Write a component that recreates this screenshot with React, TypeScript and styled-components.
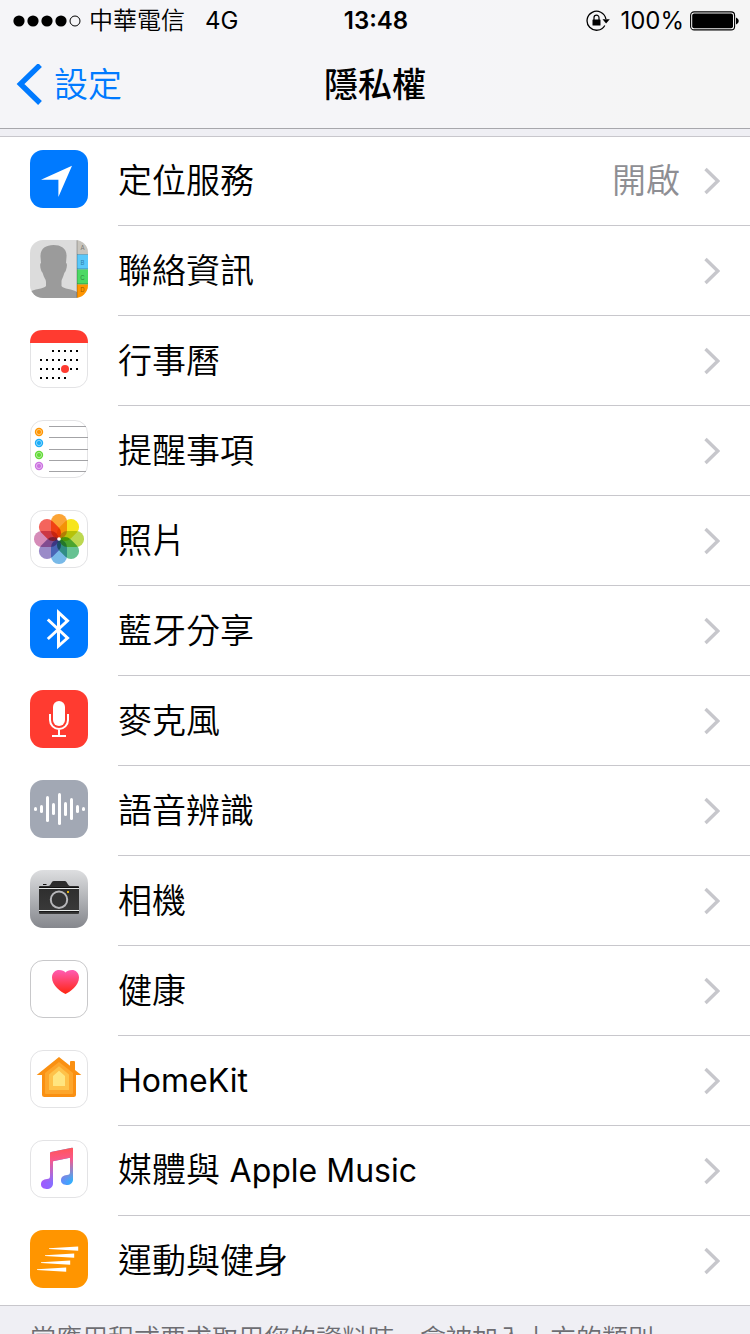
import React from 'react';
import styled, { createGlobalStyle } from 'styled-components';

const GlobalStyle = createGlobalStyle`
  * { box-sizing: border-box; }
  body {
    margin: 0;
    background: #efeff4;
    color: #000;
    font-family: Inter, 'Noto Sans CJK TC', sans-serif;
    font-weight: 400;
  }
`;

const Screen = styled.div`
  display: flex;
  flex-direction: column;
  height: 100vh;
  overflow: hidden;
`;

const TopBar = styled.header`
  flex: none;
  background: linear-gradient(to right, #f5f5f8 60%, #f5f5f5 90%);
  border-bottom: 1px solid #a7a7ac;
`;

const StatusBar = styled.div`
  display: grid;
  grid-template-columns: 1fr auto 1fr;
  align-items: center;
  height: 42px;
  padding: 0 11px 0 13px;
  font-size: 24px;
  line-height: 42px;
`;

const StatusGroup = styled.div<{ $end?: boolean }>`
  display: flex;
  align-items: center;
  justify-content: ${(p) => (p.$end ? 'flex-end' : 'flex-start')};
  gap: ${(p) => (p.$end ? 6 : 8)}px;
  white-space: nowrap;
`;

const Carrier = styled.span`
  font-weight: 350;
  margin-right: 12px;
`;

const LockGlyph = styled.svg`
  margin-right: 4px;
`;

const Clock = styled.time`
  font-weight: 600;
`;

const NavBar = styled.nav`
  display: grid;
  grid-template-columns: 1fr auto 1fr;
  align-items: center;
  height: 86px;
  padding: 0 16px;
`;

const BackButton = styled.button`
  display: flex;
  align-items: center;
  justify-self: start;
  gap: 10px;
  padding: 0;
  border: 0;
  background: none;
  color: #007aff;
  font: inherit;
  font-weight: 350;
  font-size: 34px;
  line-height: 48px;
`;

const Title = styled.h1`
  margin: 0;
  font-size: 34px;
  line-height: 48px;
  font-weight: 500;
`;

const Content = styled.main`
  flex: 1;
  min-height: 0;
  padding-top: 7px;
  overflow-y: auto;
  scrollbar-width: none;
`;

const List = styled.ul`
  margin: 0;
  padding: 0;
  list-style: none;
  background: #fff;
  box-shadow: inset 0 1px #c8c7cc, inset 0 -1px #c8c7cc;
`;

const RowBody = styled.span`
  display: flex;
  align-items: center;
  flex: 1;
  min-height: 90px;
  padding-right: 30px;
  border-bottom: 1px solid #c8c7cc;
`;

const Row = styled.a`
  display: flex;
  align-items: flex-start;
  color: inherit;
  text-decoration: none;

  li:last-child & ${RowBody} {
    border-bottom-color: transparent;
  }
`;

const AppIcon = styled.svg`
  flex: none;
  margin: 14px 30px 0;
`;

const Label = styled.span`
  flex: 1;
  font-size: 34px;
  line-height: 48px;
  font-weight: 350;
`;

const Latin = styled.span`
  font-size: 32px;
  font-weight: 400;
`;

const Value = styled.span`
  margin-right: 24px;
  color: #8e8e93;
  font-size: 34px;
  line-height: 48px;
  font-weight: 350;
`;

const Footnote = styled.p`
  margin: 0;
  padding: 15px 30px;
  color: #6d6d72;
  font-size: 26px;
  line-height: 36px;
  font-weight: 350;
`;

const Outline = ({ color = '#e3e3e5' }: { color?: string }) => (
  <rect x=".5" y=".5" width="57" height="57" rx="12.5" fill="none" stroke={color} />
);
const Tile = ({ fill }: { fill: string }) => <rect width="58" height="58" rx="13" fill={fill} />;

const LocationArt = () => (
  <>
    <Tile fill="#007aff" />
    <path d="M11 29.8 42 15.8 28.4 47V29.8Z" fill="#fff" />
  </>
);

const tabs = [
  ['A', '#c8c5be', 0, '#77756f'],
  ['B', '#5ac8fa', 14.5, '#2f7fa6'],
  ['C', '#4cd964', 29.5, '#2a8b3a'],
  ['D', '#ff9500', 44.5, '#9c5a00'],
] as const;

const ContactsArt = () => (
  <>
    <clipPath id="contacts-tile"><rect width="58" height="58" rx="13" /></clipPath>
    <g clipPath="url(#contacts-tile)">
      <rect width="58" height="58" fill="#dcdcdc" />
      <path
        d="M23.500 5C31 5 37.300 8.500 36.500 17L36 23C37.500 23.500 37 27 36 30C35.500 32 34.500 32 34 34C33 38 31.500 39 31.500 42V46C33 49 43 49 47 52V58H0V52C3 49 14 49 16 46V42C16 39 14 38 13 34C12.500 32 11.500 32 11 30C10 27 9.800 23.500 11 23L10.500 17C10 8.500 16 5 23.500 5Z"
        fill="#9b9b9b"
      />
      {tabs.map(([letter, color, y, ink]) => (
        <g key={letter}>
          <rect x="47" y={y} width="11" height="15" fill={color} />
          <rect x="47" y={y + 14} width="11" height="1" fill="#000" opacity=".3" />
          <text x="52.500" y={letter === 'D' ? y + 7 : y + 10} fontSize="6" textAnchor="middle" fill={ink}>{letter}</text>
        </g>
      ))}
      <rect x="46.500" width="1" height="58" fill="#000" opacity=".25" />
    </g>
  </>
);

const CalendarArt = () => (
  <>
    <Outline />
    <path d="M0 13C0 4 5 0 13 0H45C53 0 58 4 58 13Z" fill="#ff3b30" />
    {[[21, 2, 6], [30, 0, 6], [39, 0, 6], [48, 0, 4]].map(([y, from, to]) =>
      Array.from({ length: to - from + 1 }, (_, i) => (
        <rect key={`${y}-${i}`} x={10 + (from + i) * 6} y={y - 1} width="2" height="2" fill="#000" />
      )),
    )}
    <circle cx="35" cy="39" r="4" fill="#ff3b30" />
  </>
);

const RemindersArt = () => (
  <>
    <Outline />
    <path d="M19 6.500H56M19 17.500H58M19 29.500H58M19 40.500H58M19 51.500H56" stroke="#a3a3a6" />
    {[['#ff9500', 12], ['#1badf8', 23], ['#63da38', 35], ['#cc73e1', 46]].map(([color, y]) => (
      <g key={color}>
        <circle cx="9" cy={y} r="4.200" fill={color as string} />
        <circle cx="9" cy={y} r="2.600" fill={color as string} stroke="#fff" strokeWidth=".8" strokeOpacity=".6" />
      </g>
    ))}
  </>
);

const petals = ['#fba436', '#f7e51e', '#bcd850', '#66c292', '#78b9e8', '#9a8bc8', '#d58bb8', '#f4645c'];

const PhotosArt = () => (
  <g style={{ isolation: 'isolate' }}>
    <rect width="58" height="58" rx="13" fill="#fff" />
    <Outline />
    {petals.map((color, i) => (
      <rect
        key={color}
        x="21"
        y="4"
        width="16"
        height="24.500"
        rx="7.800"
        fill={color}
        transform={`rotate(${i * 45} 29 29)`}
        style={{ mixBlendMode: 'multiply' }}
      />
    ))}
    <circle cx="29" cy="29" r="1.800" fill="#fff" />
  </g>
);

const BluetoothArt = () => (
  <>
    <Tile fill="#007aff" />
    <path d="M17.800 19.500 37.500 38 28.500 46V12.500L37.500 20.800 17.800 39" fill="none" stroke="#fff" strokeWidth="3" />
  </>
);

const MicrophoneArt = () => (
  <>
    <Tile fill="#ff3b30" />
    <rect x="23" y="11" width="12" height="25" rx="6" fill="#fff" />
    <path d="M20 24V30a9 9 0 0 0 18 0V24M29 39V46M22 46H36" fill="none" stroke="#fff" strokeWidth="2" />
  </>
);

const SpeechArt = () => (
  <>
    <Tile fill="#a2a8b4" />
    {[2, 4, 13, 6, 16, 7, 11, 4, 2].map((half, i) => (
      <rect key={i} x={4 + i * 6} y={29 - half} width="3" height={half * 2} rx="1.500" fill="#fff" />
    ))}
  </>
);

const CameraArt = () => (
  <>
    <linearGradient id="camera-tile" x2="0" y2="1">
      <stop stopColor="#dddee0" />
      <stop offset="1" stopColor="#85878d" />
    </linearGradient>
    <linearGradient id="camera-body" x2="0" y2="1">
      <stop stopColor="#2b2b2b" />
      <stop offset="1" stopColor="#3b3b3b" />
    </linearGradient>
    <Tile fill="url(#camera-tile)" />
    <path d="M13 14.500h3.500" stroke="#111" />
    <path d="M9 17Q9 16 10 16H18Q19.500 16 20.500 14.500L22 12Q22.500 11 24 11H34.500Q36 11 36.500 12L38 14.500Q39 16 40.500 16H48Q49 16 49 17V43Q49 44 48 44H10Q9 44 9 43Z" fill="url(#camera-body)" />
    <path d="M9 18.500H49M9 40.500H49" stroke="#e6e9e8" />
    <path d="M9 17.500H49M9 41.700H49" stroke="#111" />
    <circle cx="29" cy="29.700" r="8.200" fill="#333" stroke="#b7b7ba" strokeWidth="2" />
    <rect x="37" y="21" width="2" height="2" fill="#e0b010" />
  </>
);

const HealthArt = () => (
  <>
    <linearGradient id="heart" x2="0" y2="1">
      <stop stopColor="#ff5cb4" />
      <stop offset="1" stopColor="#ff2510" />
    </linearGradient>
    <Outline color="#c8c8ca" />
    <path d="M35.500 34C31 32 22 25.500 22 17.500C22 12.500 25.500 10 29 10C32 10 34.500 11 35.500 12.500C36.500 11 39 10 42 10C45.500 10 49 12.500 49 17.500C49 25.500 40 32 35.500 34Z" fill="url(#heart)" />
  </>
);

const HomeArt = () => (
  <>
    <Outline />
    <path d="M29 7 40 15.800V12Q40 11 41 11H44Q45 11 45 12V20L51.300 25H46V44.500Q46 47 43.500 47H14.500Q12 47 12 44.500V25H6.700Z" fill="#fa9012" />
    <path d="M29 12 43 23V43Q43 44 42 44H16Q15 44 15 43V23Z" fill="#fda62c" />
    <path d="M29 16.300 39 24.500V40H19V24.500Z" fill="#fec24a" />
    <path d="M29 20.700 35 26V36H23V26Z" fill="#ffe580" />
  </>
);

const MusicArt = () => (
  <>
    <linearGradient id="note-side" x1="11" x2="43" y1="49" y2="43" gradientUnits="userSpaceOnUse">
      <stop stopColor="#a257ff" />
      <stop offset=".35" stopColor="#8a6cff" />
      <stop offset="1" stopColor="#2fb2fb" />
    </linearGradient>
    <linearGradient id="note-top" x1="29" x2="31" y1="10" y2="42" gradientUnits="userSpaceOnUse">
      <stop stopColor="#ff5560" />
      <stop offset=".3" stopColor="#f9588a" />
      <stop offset="1" stopColor="#f958a0" stopOpacity="0" />
    </linearGradient>
    <Outline />
    {['url(#note-side)', 'url(#note-top)'].map((fill) => (
      <path
        key={fill}
        d="M21 12 42 7.800Q43 7.600 43 8.600V39.500C43 43 40.500 45 36.500 45C33 45 31 43 31 40.300C31 37 33.500 35.300 37 35C39.500 34.800 40 34 40 32V17.700L23 21.200V43.500C23 47 20.500 49 16.500 49C13 49 11 47 11 44.300C11 41 13.500 39.300 17 39C19.500 38.800 20 38 20 36V13.300Q20 12.200 21 12Z"
        fill={fill}
      />
    ))}
  </>
);

const MotionArt = () => (
  <>
    <Tile fill="#ff9500" />
    {[0, 1, 2, 3].map((i) => (
      <path key={i} d="M19 18.200 48.200 16.500V20.700L19 19Z" transform={`translate(${-4 * i} ${7 * i})`} fill="#fff" />
    ))}
  </>
);

interface Item {
  label: string;
  latin?: string;
  value?: string;
  Art: () => React.JSX.Element;
}

const items: Item[] = [
  { label: '定位服務', value: '開啟', Art: LocationArt },
  { label: '聯絡資訊', Art: ContactsArt },
  { label: '行事曆', Art: CalendarArt },
  { label: '提醒事項', Art: RemindersArt },
  { label: '照片', Art: PhotosArt },
  { label: '藍牙分享', Art: BluetoothArt },
  { label: '麥克風', Art: MicrophoneArt },
  { label: '語音辨識', Art: SpeechArt },
  { label: '相機', Art: CameraArt },
  { label: '健康', Art: HealthArt },
  { label: '', latin: 'HomeKit', Art: HomeArt },
  { label: '媒體與 ', latin: 'Apple Music', Art: MusicArt },
  { label: '運動與健身', Art: MotionArt },
];

const Disclosure = () => (
  <svg width="16" height="28" viewBox="0 0 16 28" aria-hidden="true">
    <path d="M1.500 2 13.800 14 1.500 26" fill="none" stroke="#c7c7cc" strokeWidth="3.400" />
  </svg>
);

export default function App() {
  return (
    <Screen lang="zh-Hant">
      <GlobalStyle />
      <TopBar>
        <StatusBar>
          <StatusGroup>
            <svg width="68" height="12" viewBox="0 0 68 12" aria-label="訊號">
              {[6, 20, 34, 48].map((x) => <circle key={x} cx={x} cy="6" r="5.600" />)}
              <circle cx="62" cy="6" r="5" fill="none" stroke="#000" />
            </svg>
            <Carrier>中華電信</Carrier>
            <span>4G</span>
          </StatusGroup>
          <Clock>13:48</Clock>
          <StatusGroup $end>
            <LockGlyph width="24" height="22" viewBox="0 0 24 22" aria-label="方向鎖定">
              <path d="M18.800 15.500A9.500 9.500 0 1 1 19.900 9" fill="none" stroke="#000" strokeWidth="1.300" />
              <path d="M16.500 9.300H23.800L20.100 13.500Z" />
              <rect x="6.500" y="9.500" width="8" height="6" rx=".6" />
              <path d="M8 10V7.700a2.500 2.500 0 0 1 5 0V10" fill="none" stroke="#000" strokeWidth="1.200" />
            </LockGlyph>
            <span>100%</span>
            <svg width="49" height="20" viewBox="0 0 49 20" aria-label="電池">
              <rect x=".6" y=".9" width="44" height="18" rx="3.500" fill="none" stroke="#000" strokeWidth="1.100" />
              <rect x="2.200" y="2.500" width="40.800" height="14.800" rx="2" />
              <path d="M46 6.500Q48.800 7.500 48.800 10T46 13.500Z" />
            </svg>
          </StatusGroup>
        </StatusBar>
        <NavBar>
          <BackButton type="button">
            <svg width="28" height="42" viewBox="0 0 28 42" aria-hidden="true">
              <path d="M24 1 4.500 20 24 39" fill="none" stroke="#007aff" strokeWidth="5.400" />
            </svg>
            設定
          </BackButton>
          <Title>隱私權</Title>
        </NavBar>
      </TopBar>
      <Content>
        <List>
          {items.map(({ label, latin, value, Art }) => (
            <li key={label + (latin ?? '')}>
              <Row href="#">
                <AppIcon width="58" height="58" viewBox="0 0 58 58" aria-hidden="true">
                  <Art />
                </AppIcon>
                <RowBody>
                  <Label>
                    {label}
                    {latin && <Latin>{latin}</Latin>}
                  </Label>
                  {value && <Value>{value}</Value>}
                  <Disclosure />
                </RowBody>
              </Row>
            </li>
          ))}
        </List>
        <Footnote>當應用程式要求取用您的資料時，會被加入上方的類別。</Footnote>
      </Content>
    </Screen>
  );
}
